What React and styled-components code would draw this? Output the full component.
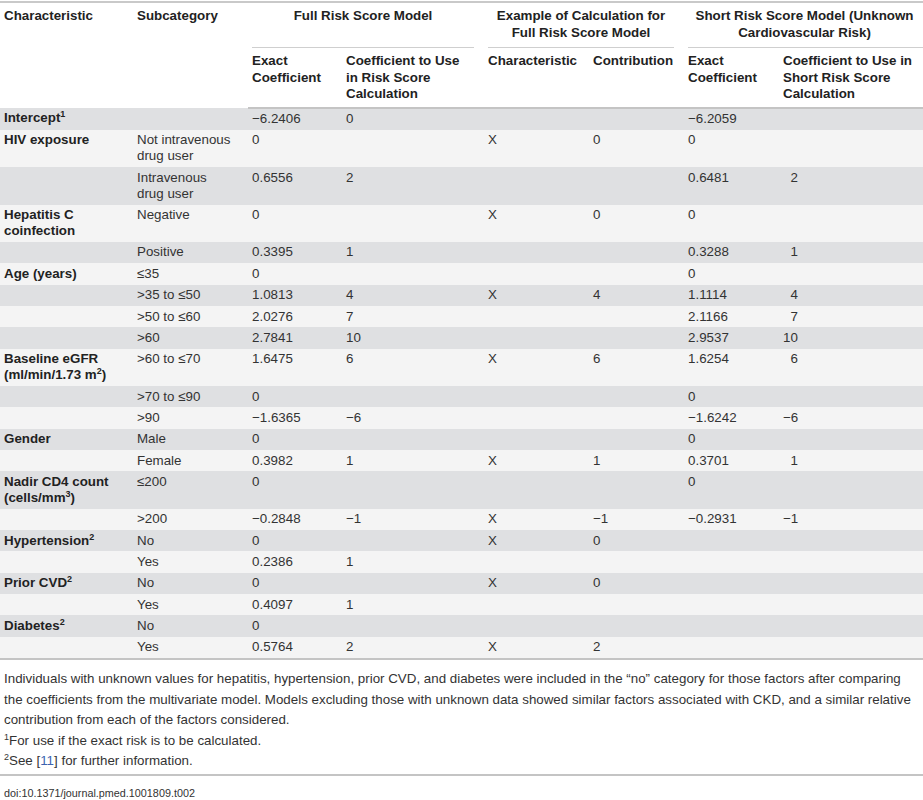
import React from "react";
import styled, { createGlobalStyle } from "styled-components";

const GlobalStyle = createGlobalStyle`
  html, body { margin: 0; padding: 0; background: #fff; }
  body {
    font-family: "Liberation Sans", Arial, Helvetica, sans-serif;
    color: #333;
    -webkit-font-smoothing: antialiased;
  }
`;

const Page = styled.div`
  width: 923px;
  padding-top: 1px;
`;

const Table = styled.table`
  width: 923px;
  table-layout: fixed;
  border-collapse: collapse;
  font-size: 13.35px;
  line-height: 16px;
  border-top: 2px solid #c9c9c9;
  border-bottom: 2px solid #c4c4c4;
`;

const Th = styled.th`
  text-align: ${(p) => (p.$center ? "center" : "left")};
  vertical-align: top;
  font-weight: bold;
  color: #222;
  line-height: 16.5px;
  padding: ${(p) => (p.$top ? "5px 10px 7px 4px" : "5px 10px 4px 4px")};
  padding-right: ${(p) => (p.$last ? "2px" : "10px")};
  white-space: nowrap;
`;

const GroupTh = styled(Th)`
  background-image: linear-gradient(#cfcfcf, #cfcfcf);
  background-repeat: no-repeat;
  background-size: ${(p) => (p.$last ? "calc(100% - 4px)" : "calc(100% - 14px)")} 1px;
  background-position: 4px 100%;
`;

const HeadRow = styled.tr`
  &:last-child th {
    border-bottom: 2px solid #c4c4c4;
  }
`;

const Row = styled.tr`
  background: ${(p) => (p.$shade ? "#dfe0e2" : "#f4f4f4")};
`;

const Td = styled.td`
  vertical-align: top;
  padding: 2.6px 10px 2.75px 4px;
  color: ${(p) => (p.$label ? "#222" : "#333")};
  font-weight: ${(p) => (p.$label ? "bold" : "normal")};
  white-space: nowrap;
`;

const Sup = styled.sup`
  font-size: 9px;
  line-height: 0;
  vertical-align: 5px;
`;

const Notes = styled.div`
  padding: 9px 0 2px 4px;
  font-size: 13.35px;
  line-height: 20.5px;
  color: #333;
  border-bottom: 2px solid #c4c4c4;
`;

const NoteLine = styled.div`
  white-space: nowrap;
`;

const Ref = styled.span`
  color: #3c63af;
`;

const Doi = styled.div`
  padding: 9px 0 0 4px;
  font-size: 10.8px;
  line-height: 16px;
  color: #333;
`;

const M = "\u2212";
const F = "\u2007";

const rows = [
  { c: <>Intercept<Sup>1</Sup></>, s: "", e: `${M}6.2406`, k: "0", x: "", n: "", se: `${M}6.2059`, sk: "" },
  { c: "HIV exposure", s: <>Not intravenous<br />drug user</>, e: "0", k: "", x: "X", n: "0", se: "0", sk: "" },
  { c: "", s: <>Intravenous<br />drug user</>, e: "0.6556", k: "2", x: "", n: "", se: "0.6481", sk: `${F}2` },
  { c: <>Hepatitis C<br />coinfection</>, s: "Negative", e: "0", k: "", x: "X", n: "0", se: "0", sk: "" },
  { c: "", s: "Positive", e: "0.3395", k: "1", x: "", n: "", se: "0.3288", sk: `${F}1` },
  { c: "Age (years)", s: "\u226435", e: "0", k: "", x: "", n: "", se: "0", sk: "" },
  { c: "", s: ">35 to \u226450", e: "1.0813", k: "4", x: "X", n: "4", se: "1.1114", sk: `${F}4` },
  { c: "", s: ">50 to \u226460", e: "2.0276", k: "7", x: "", n: "", se: "2.1166", sk: `${F}7` },
  { c: "", s: ">60", e: "2.7841", k: "10", x: "", n: "", se: "2.9537", sk: "10" },
  { c: <>Baseline eGFR<br />(ml/min/1.73 m<Sup>2</Sup>)</>, s: ">60 to \u226470", e: "1.6475", k: "6", x: "X", n: "6", se: "1.6254", sk: `${F}6` },
  { c: "", s: ">70 to \u226490", e: "0", k: "", x: "", n: "", se: "0", sk: "" },
  { c: "", s: ">90", e: `${M}1.6365`, k: `${M}6`, x: "", n: "", se: `${M}1.6242`, sk: `${M}6` },
  { c: "Gender", s: "Male", e: "0", k: "", x: "", n: "", se: "0", sk: "" },
  { c: "", s: "Female", e: "0.3982", k: "1", x: "X", n: "1", se: "0.3701", sk: `${F}1` },
  { c: <>Nadir CD4 count<br />(cells/mm<Sup>3</Sup>)</>, s: "\u2264200", e: "0", k: "", x: "", n: "", se: "0", sk: "" },
  { c: "", s: ">200", e: `${M}0.2848`, k: `${M}1`, x: "X", n: `${M}1`, se: `${M}0.2931`, sk: `${M}1` },
  { c: <>Hypertension<Sup>2</Sup></>, s: "No", e: "0", k: "", x: "X", n: "0", se: "", sk: "" },
  { c: "", s: "Yes", e: "0.2386", k: "1", x: "", n: "", se: "", sk: "" },
  { c: <>Prior CVD<Sup>2</Sup></>, s: "No", e: "0", k: "", x: "X", n: "0", se: "", sk: "" },
  { c: "", s: "Yes", e: "0.4097", k: "1", x: "", n: "", se: "", sk: "" },
  { c: <>Diabetes<Sup>2</Sup></>, s: "No", e: "0", k: "", x: "", n: "", se: "", sk: "" },
  { c: "", s: "Yes", e: "0.5764", k: "2", x: "X", n: "2", se: "", sk: "" },
];

export default function App() {
  return (
    <Page>
      <GlobalStyle />
      <Table>
        <colgroup>
          <col style={{ width: 133 }} />
          <col style={{ width: 115 }} />
          <col style={{ width: 94 }} />
          <col style={{ width: 142 }} />
          <col style={{ width: 105 }} />
          <col style={{ width: 95 }} />
          <col style={{ width: 95 }} />
          <col style={{ width: 144 }} />
        </colgroup>
        <thead>
          <HeadRow>
            <Th rowSpan={2} $top>Characteristic</Th>
            <Th rowSpan={2} $top>Subcategory</Th>
            <GroupTh colSpan={2} $center $top>Full Risk Score Model</GroupTh>
            <GroupTh colSpan={2} $center $top>
              Example of Calculation for<br />Full Risk Score Model
            </GroupTh>
            <GroupTh colSpan={2} $center $top $last>
              Short Risk Score Model (Unknown<br />Cardiovascular Risk)
            </GroupTh>
          </HeadRow>
          <HeadRow>
            <Th>Exact<br />Coefficient</Th>
            <Th>Coefficient to Use<br />in Risk Score<br />Calculation</Th>
            <Th>Characteristic</Th>
            <Th>Contribution</Th>
            <Th>Exact<br />Coefficient</Th>
            <Th $last>Coefficient to Use in<br />Short Risk Score<br />Calculation</Th>
          </HeadRow>
        </thead>
        <tbody>
          {rows.map((r, i) => (
            <Row key={i} $shade={i % 2 === 0}>
              <Td $label>{r.c}</Td>
              <Td>{r.s}</Td>
              <Td>{r.e}</Td>
              <Td>{r.k}</Td>
              <Td>{r.x}</Td>
              <Td>{r.n}</Td>
              <Td>{r.se}</Td>
              <Td>{r.sk}</Td>
            </Row>
          ))}
        </tbody>
      </Table>
      <Notes>
        <NoteLine>
          Individuals with unknown values for hepatitis, hypertension, prior CVD, and diabetes were included in the “no” category for those factors after comparing
        </NoteLine>
        <NoteLine>
          the coefficients from the multivariate model. Models excluding those with unknown data showed similar factors associated with CKD, and a similar relative
        </NoteLine>
        <NoteLine>contribution from each of the factors considered.</NoteLine>
        <NoteLine>
          <Sup>1</Sup>For use if the exact risk is to be calculated.
        </NoteLine>
        <NoteLine>
          <Sup>2</Sup>See [<Ref>11</Ref>] for further information.
        </NoteLine>
      </Notes>
      <Doi>doi:10.1371/journal.pmed.1001809.t002</Doi>
    </Page>
  );
}
